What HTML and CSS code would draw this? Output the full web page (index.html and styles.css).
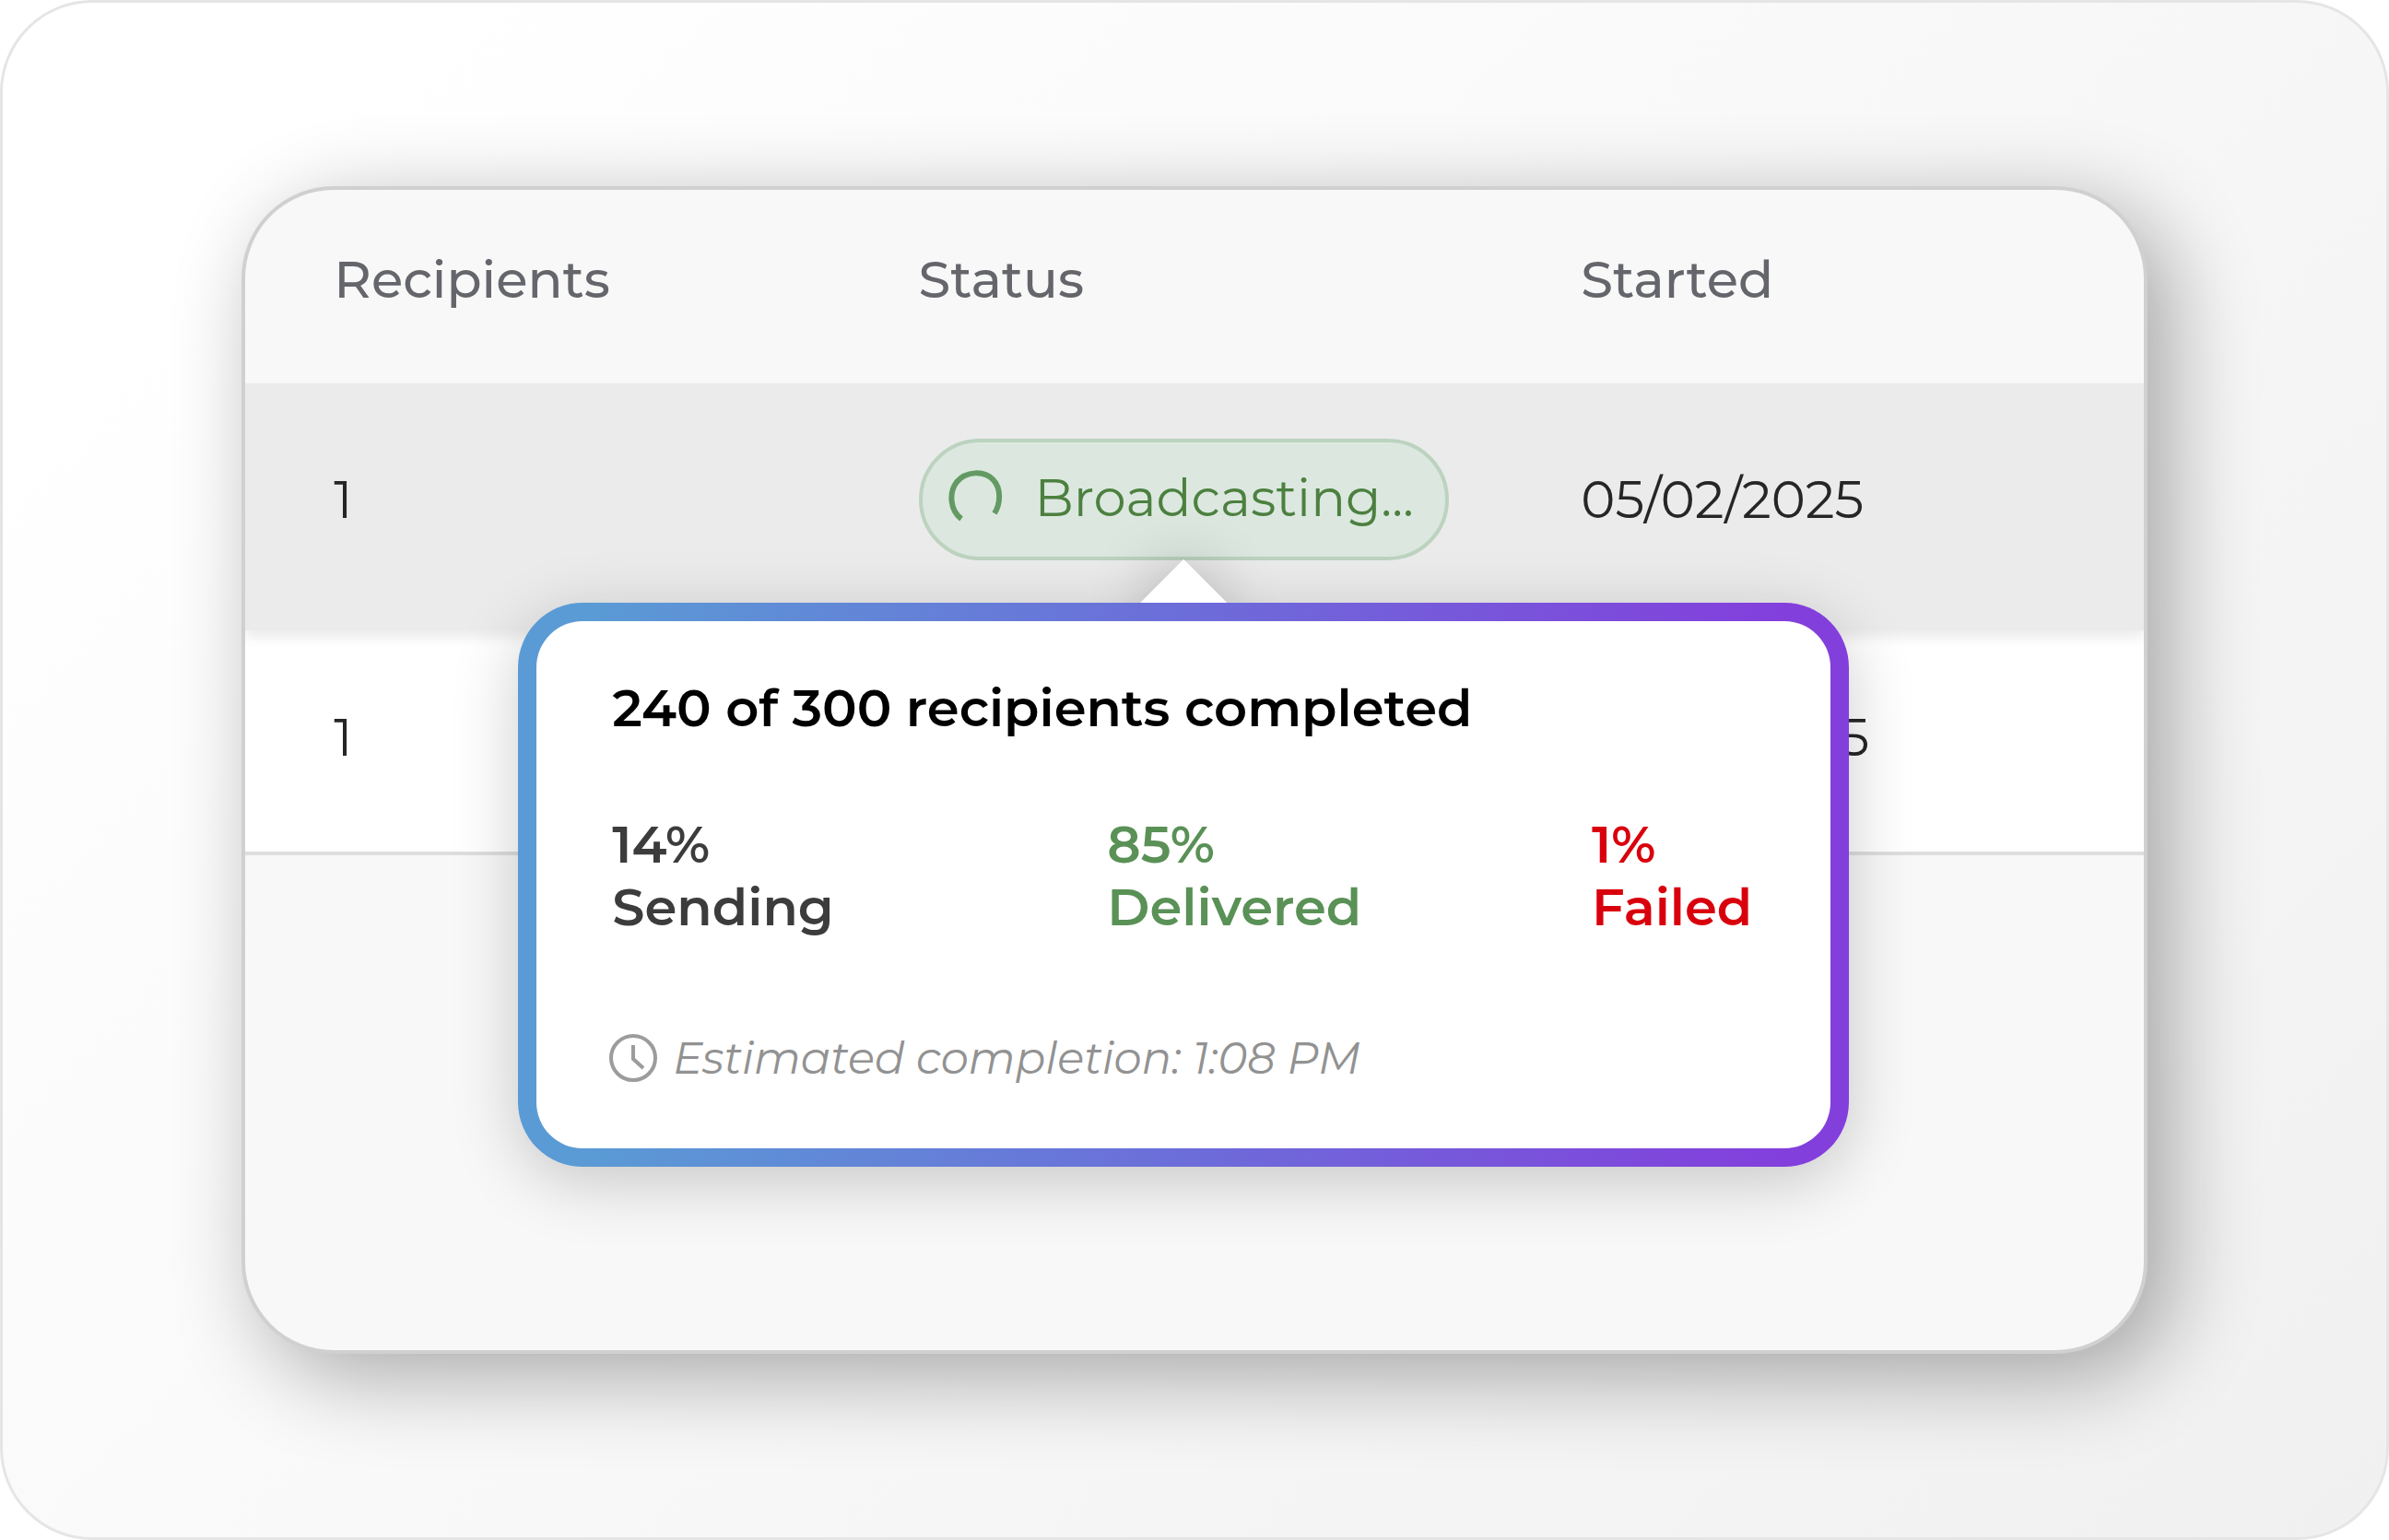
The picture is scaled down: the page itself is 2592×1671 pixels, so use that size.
FILE: index.html
```html
<!DOCTYPE html>
<html lang="en">
<head>
    <meta charset="UTF-8">
    <meta name="viewport" content="width=device-width, initial-scale=1.0">
    <title>Broadcasts</title>
    <link rel="stylesheet" href="styles.css">
</head>
<body>
    <main class="stage">
        <section class="card">
            <table class="broadcasts">
                <thead>
                    <tr>
                        <th class="col-recipients">Recipients</th>
                        <th class="col-status">Status</th>
                        <th>Started</th>
                    </tr>
                </thead>
                <tbody>
                    <tr class="row-active">
                        <td>1</td>
                        <td>
                            <div class="status">
                                <span class="badge">
                                    <svg class="spinner" viewBox="0 0 60 60" aria-hidden="true">
                                        <path d="M14 53 C2 44 0 25 9 13 C19 1 39 0 49 11 C57 20 57 36 50 47" />
                                    </svg>
                                    Broadcasting...
                                </span>

                                <!-- Progress popover -->
                                <div class="popover" role="tooltip">
                                    <div class="popover-arrow"></div>
                                    <div class="popover-body">
                                        <h2>240 of 300 recipients completed</h2>
                                        <div class="stats">
                                            <div class="stat">14%<br>Sending</div>
                                            <div class="stat delivered">85%<br>Delivered</div>
                                            <div class="stat failed">1%<br>Failed</div>
                                        </div>
                                        <p class="estimate">
                                            <svg class="clock" viewBox="0 0 54 54" aria-hidden="true">
                                                <circle cx="27" cy="27" r="24" />
                                                <path d="M27 13 V28 L38 38" />
                                            </svg>
                                            Estimated completion: 1:08 PM
                                        </p>
                                    </div>
                                </div>
                            </div>
                        </td>
                        <td>05/02/2025</td>
                    </tr>
                    <tr class="row-plain">
                        <td>1</td>
                        <td></td>
                        <td>04/30/2025</td>
                    </tr>
                </tbody>
            </table>
        </section>
    </main>
</body>
</html>
```
FILE: styles.css
```css
:root {
    --blue: #5a9bd5;
    --purple: #833fdc;
    --green: #5a9156;
    --red: #d9000d;
    --surface: #f8f8f8;
}

* {
    margin: 0;
    padding: 0;
    box-sizing: border-box;
}

body {
    font-family: Montserrat, Inter, "Open Sans", sans-serif;
    font-size: 56px;
    line-height: 68px;
    background: #fff;
    color: #262626;
}

.stage {
    display: flex;
    min-height: 100vh;
    padding: 199px 10vw;
    border: 3px solid #e5e5e5;
    border-radius: 100px;
    background: linear-gradient(135deg, #fff 10%, #f0f0f0);
}

.card {
    flex: 1;
    overflow: hidden;
    border: 4px solid #d0d0d0;
    border-radius: 100px;
    background: var(--surface);
    box-shadow: 24px 24px 96px rgba(0, 0, 0, 0.33);
}

/* Table */
.broadcasts {
    width: 100%;
    table-layout: fixed;
    border-spacing: 0;
}

.broadcasts th,
.broadcasts td {
    padding: 0 0 16px 96px;
    text-align: left;
    vertical-align: middle;
}

.broadcasts th {
    height: 210px;
    font-weight: 500;
    color: #64666b;
}

.col-recipients {
    width: 30.8%;
}

.col-status {
    width: 34.9%;
}

.row-active {
    position: relative;
    z-index: 1;
    background: #ebebeb;
    box-shadow: 0 8px 12px rgba(0, 0, 0, 0.08);
}

.row-active td {
    height: 268px;
}

.row-plain {
    background: #fff;
}

.broadcasts .row-plain td {
    height: 244px;
    padding-bottom: 8px;
    border-bottom: 4px solid #dedede;
}

/* Status badge */
.status {
    position: relative;
    display: inline-block;
    vertical-align: middle;
}

.badge {
    display: flex;
    align-items: center;
    gap: 34px;
    padding: 26px 34px 30px 28px;
    border: 4px solid #bbd3bf;
    border-radius: 66px;
    background: #dce8df;
    color: #4c8040;
}

.spinner {
    width: 60px;
    height: 60px;
    fill: none;
    stroke: #639a63;
    stroke-width: 6;
}

/* Popover */
.popover {
    position: absolute;
    top: 100%;
    left: 50%;
    width: 1444px;
    margin-top: 46px;
    transform: translateX(-50%);
}

/* The rotated square only casts the arrow's shadow, the white tip sits on the body */
.popover-arrow {
    position: absolute;
    top: -33px;
    left: 50%;
    width: 66px;
    height: 66px;
    margin-left: -33px;
    background: #fff;
    box-shadow: 0 0 64px rgba(0, 0, 0, 0.25);
    transform: rotate(45deg);
}

.popover-body {
    position: relative;
    padding: 60px 82px 64px;
    border: 20px solid transparent;
    border-radius: 70px;
    background: linear-gradient(#fff, #fff) padding-box,
                linear-gradient(90deg, var(--blue) 5%, #6a72d9 45%, var(--purple) 95%) border-box;
    box-shadow: 0 16px 72px rgba(0, 0, 0, 0.2);
    color: #3c3c3c;
}

.popover-body::before {
    content: "";
    position: absolute;
    top: -67px;
    left: 50%;
    width: 94px;
    height: 47px;
    margin-left: -47px;
    background: #fff;
    clip-path: polygon(50% 0, 100% 100%, 0 100%);
}

.popover-body h2 {
    margin-bottom: 80px;
    font-size: 56px;
    font-weight: 600;
    color: #000;
}

.stats {
    display: grid;
    grid-template-columns: 43.3% 42.4% 14.3%;
    margin-bottom: 96px;
}

.stat {
    font-weight: 600;
}

.delivered {
    color: var(--green);
}

.failed {
    color: var(--red);
}

.estimate {
    display: flex;
    align-items: center;
    gap: 16px;
    margin-left: -4px;
    font-size: 48px;
    font-style: italic;
    color: #929292;
}

.clock {
    width: 54px;
    height: 54px;
    fill: none;
    stroke: #9c9c9c;
    stroke-width: 4;
}
```
